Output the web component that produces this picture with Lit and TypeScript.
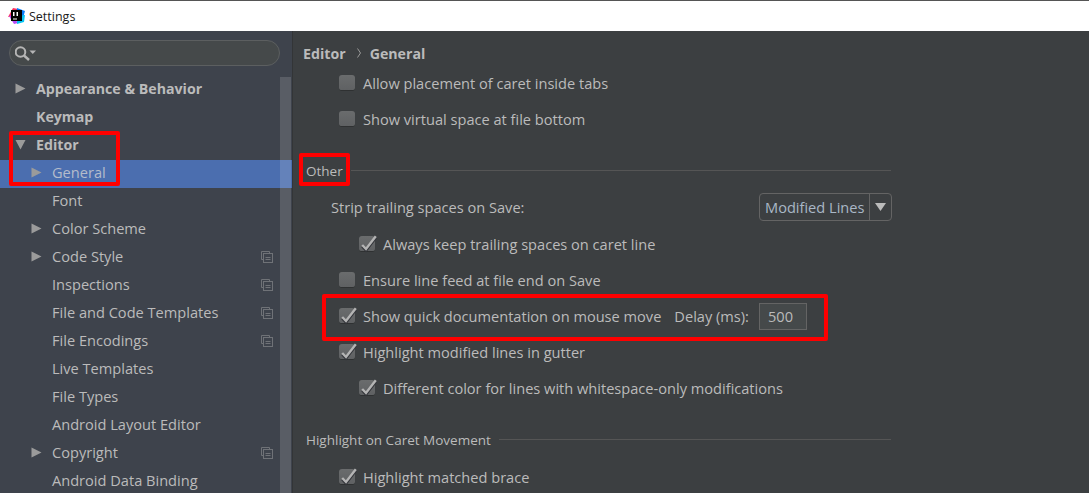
import { LitElement, html, css, nothing } from "lit";
import { customElement } from "lit/decorators.js";

type Item = { label: string; level: number; arrow?: "right" | "down"; copy?: boolean; selected?: boolean };

const TREE: Item[] = [
  { label: "Appearance & Behavior", level: 0, arrow: "right" },
  { label: "Keymap", level: 0 },
  { label: "Editor", level: 0, arrow: "down" },
  { label: "General", level: 1, arrow: "right", selected: true },
  { label: "Font", level: 1 },
  { label: "Color Scheme", level: 1, arrow: "right" },
  { label: "Code Style", level: 1, arrow: "right", copy: true },
  { label: "Inspections", level: 1, copy: true },
  { label: "File and Code Templates", level: 1, copy: true },
  { label: "File Encodings", level: 1, copy: true },
  { label: "Live Templates", level: 1 },
  { label: "File Types", level: 1 },
  { label: "Android Layout Editor", level: 1 },
  { label: "Copyright", level: 1, arrow: "right", copy: true },
  { label: "Android Data Binding", level: 1 },
];

@customElement("app-root")
export class AppRoot extends LitElement {
  static styles = css`
    :host {
      display: block;
      width: 1089px;
      height: 493px;
      overflow: hidden;
      position: relative;
      font-family: "Open Sans", "Noto Sans", sans-serif;
      font-size: 14.6px;
      color: #bbbbbb;
      background: #3c3f41;
    }
    .titlebar {
      height: 31px;
      box-sizing: border-box;
      border-top: 1px solid #555555;
      background: #ffffff;
      display: flex;
      align-items: center;
      padding: 0 0 0 8px;
      gap: 4px;
      color: #1a1a1a;
      font-size: 12.5px;
    }
    .main { display: flex; height: 462px; }
    .side {
      width: 293px;
      box-sizing: border-box;
      flex: none;
      background: #3e434c;
      border-right: 1px solid #333537;
      position: relative;
      overflow: hidden;
    }
    .search {
      margin: 9px 0 10px 9px;
      width: 271px;
      height: 26px;
      box-sizing: border-box;
      border: 1px solid #5c5f60;
      border-radius: 13px;
      background: #45494a;
      display: flex;
      align-items: center;
      padding-left: 5px;
    }
    .row {
      height: 28px;
      box-sizing: border-box;
      display: flex;
      align-items: center;
      padding-right: 19px;
      padding-bottom: 4px;
      white-space: nowrap;
    }
    .row.l0 { font-weight: 700; font-size: 14.2px; padding-left: 15px; color: #bbbbbb; }
    .row.l1 { padding-left: 31px; }
    .row.sel { background: #4b6eaf; color: #b4bccb; }
    .arrow { width: 21px; flex: none; display: flex; align-items: center; }
    .label { flex: 1; }
    .cp { display: flex; margin-top: 2px; }
    .scroll {
      position: absolute;
      left: 280px;
      top: 46px;
      width: 11px;
      bottom: 0;
      background: rgba(255, 255, 255, 0.14);
    }
    .content { flex: 1; position: relative; overflow: hidden; }
    .crumb {
      height: 22px;
      margin-top: 11px;
      padding-left: 10px;
      display: flex;
      align-items: center;
      font-weight: 700;
      font-size: 14.2px;
      color: #bbbbbb;
    }
    .sep { display: flex; margin: 0 9px 0 11px; }
    .body { width: 598px; }
    .check {
      height: 36px;
      display: flex;
      align-items: center;
      gap: 8px;
      padding-left: 46px;
      white-space: nowrap;
    }
    .check.nested { padding-left: 66px; }
    .first { margin-top: 1px; }
    .box {
      width: 16px;
      height: 16px;
      flex: none;
      box-sizing: border-box;
      border-radius: 3px;
      background: linear-gradient(#6a6c6d, #5f6163);
      border-bottom: 1px solid #2f3132;
      position: relative;
    }
    .tick { position: absolute; left: 0; top: 0; overflow: visible; }
    .title {
      display: flex;
      align-items: center;
      gap: 8px;
      height: 20px;
      padding-left: 13px;
      font-size: 13.5px;
      white-space: nowrap;
    }
    .title::after { content: ""; flex: 1; height: 1px; background: #555555; margin-top: -2px; }
    .t-other { margin-top: 24px; }
    .t-caret { margin-top: 24px; margin-bottom: 9px; }
    .strip {
      height: 28px;
      margin-top: 12px;
      display: flex;
      align-items: center;
      justify-content: space-between;
      padding-left: 38px;
    }
    .combo {
      width: 133px;
      height: 28px;
      box-sizing: border-box;
      border: 1px solid #646464;
      border-radius: 4px;
      display: flex;
      align-items: center;
      margin-right: -1px;
      color: #a9b7c6;
    }
    .combo .val { width: 110px; padding-left: 5px; box-sizing: border-box; border-right: 1px solid #646464; height: 100%; display: flex; align-items: center; white-space: nowrap; }
    .combo .btn { flex: 1; display: flex; justify-content: center; }
    .strip-sub { margin-top: 5px; }
    .delay { margin-left: 5px; }
    .field {
      width: 48px;
      height: 27px;
      box-sizing: border-box;
      border: 1px solid #646464;
      background: #45494a;
      color: #bbbbbb;
      display: flex;
      align-items: center;
      padding-left: 8px;
      margin-left: 2px;
    }
    .mark {
      position: absolute;
      box-sizing: border-box;
      border: 4px solid #ff0000;
      border-radius: 2px;
      pointer-events: none;
    }
    .m1 { left: 9px; top: 131px; width: 111px; height: 55px; }
    .m2 { left: 299px; top: 153px; width: 51px; height: 33px; }
    .m3 { left: 322px; top: 294px; width: 506px; height: 47px; }
  `;

  private arrow(kind?: "right" | "down") {
    if (!kind) return html`<span class="arrow"></span>`;
    return html`<span class="arrow">
      <svg width="11" height="11" viewBox="0 0 11 11">
        <path d=${kind === "right" ? "M0.5 0.5 L10.5 5.5 L0.5 10.5 Z" : "M0.5 1 L10.5 1 L5.5 10.5 Z"} fill="#9b9b9b"></path>
      </svg>
    </span>`;
  }

  private copyIcon() {
    return html`<svg width="12" height="12" viewBox="0 0 12 12" fill="none" stroke="#6f7277">
      <path d="M8.5 2.5 V0.5 H0.5 V8.5 H2.5"></path>
      <rect x="2.5" y="2.5" width="9" height="9"></rect>
      <path d="M4.5 6.5 H9.5 M4.5 8.5 H9.5"></path>
    </svg>`;
  }

  private tick() {
    return html`<svg width="18" height="16" viewBox="0 0 18 16" class="tick">
      <path d="M3.2 9.4 L7 13.4 L16.8 0.6" fill="none" stroke="#33353a" stroke-width="2.6" transform="translate(0 1)"></path>
      <path d="M3.2 9 L7 13 L16.8 0.2" fill="none" stroke="#b4b4b4" stroke-width="2.4"></path>
    </svg>`;
  }

  private check(label: string, checked: boolean, cls = "") {
    return html`<div class="check ${cls}">
      <span class="box">${checked ? this.tick() : nothing}</span>
      <span>${label}</span>
    </div>`;
  }

  render() {
    return html`
      <div class="titlebar">
        <svg width="17" height="17" viewBox="0 0 17 17">
          <path d="M5 0 L10 1 L8 8 L0 9 Z" fill="#fe315d"></path>
          <path d="M9 0 L17 3 L15 10 L8 8 Z" fill="#087cfa"></path>
          <path d="M1 8 L6 16 L10 15 L4 7 Z" fill="#b74af7"></path>
          <path d="M9 16 L16 14 L17 7 L9 8 Z" fill="#07c3f2"></path>
          <rect x="3" y="2" width="11" height="11" fill="#000000"></rect>
          <rect x="5" y="4" width="1.5" height="4" fill="#ffffff"></rect>
          <rect x="8.5" y="4" width="1.5" height="4" fill="#ffffff"></rect>
          <rect x="5" y="10.5" width="4" height="1" fill="#ffffff"></rect>
        </svg>
        <span>Settings</span>
      </div>
      <div class="main">
        <div class="side">
          <div class="search">
            <svg width="24" height="18" viewBox="0 0 24 18" fill="none">
              <circle cx="5.5" cy="8" r="4.8" stroke="#b5b5b5" stroke-width="2"></circle>
              <path d="M9 11.5 L14 16" stroke="#b5b5b5" stroke-width="2.4"></path>
              <path d="M14.5 6.5 H21 L17.75 10 Z" fill="#b5b5b5"></path>
            </svg>
          </div>
          ${TREE.map(
            (i) => html`<div class="row l${i.level} ${i.selected ? "sel" : ""}">
              ${this.arrow(i.arrow)}
              <span class="label">${i.label}</span>
              ${i.copy ? html`<span class="cp">${this.copyIcon()}</span>` : nothing}
            </div>`
          )}
          <div class="scroll"></div>
        </div>
        <div class="content">
          <div class="crumb">
            <span>Editor</span>
            <span class="sep"><svg width="4" height="10" viewBox="0 0 4 10"><path d="M0.5 0.5 L3.5 5 L0.5 9.5" fill="none" stroke="#999999"></path></svg></span>
            <span>General</span>
          </div>
          <div class="body">
            ${this.check("Allow placement of caret inside tabs", false, "first")}
            ${this.check("Show virtual space at file bottom", false)}
            <div class="title t-other"><span>Other</span></div>
            <div class="strip">
              <span>Strip trailing spaces on Save:</span>
              <div class="combo">
                <span class="val">Modified Lines</span>
                <span class="btn"><svg width="11" height="8" viewBox="0 0 11 8"><path d="M0 0 H11 L5.5 8 Z" fill="#bbbbbb"></path></svg></span>
              </div>
            </div>
            ${this.check("Always keep trailing spaces on caret line", true, "nested strip-sub")}
            ${this.check("Ensure line feed at file end on Save", false)}
            <div class="check">
              <span class="box">${this.tick()}</span>
              <span>Show quick documentation on mouse move</span>
              <span class="delay">Delay (ms):</span>
              <span class="field">500</span>
            </div>
            ${this.check("Highlight modified lines in gutter", true)}
            ${this.check("Different color for lines with whitespace-only modifications", true, "nested")}
            <div class="title t-caret"><span>Highlight on Caret Movement</span></div>
            ${this.check("Highlight matched brace", true)}
          </div>
        </div>
      </div>
      <div class="mark m1"></div>
      <div class="mark m2"></div>
      <div class="mark m3"></div>
    `;
  }
}
